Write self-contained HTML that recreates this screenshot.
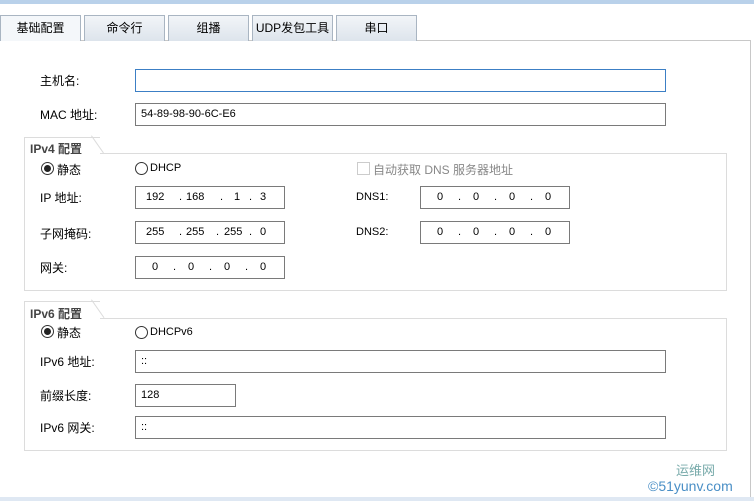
<!DOCTYPE html>
<html><head><meta charset="utf-8"><style>
*{box-sizing:border-box;margin:0;padding:0}
body{width:754px;height:501px;background:#fff;position:relative;overflow:hidden;font-family:"Liberation Sans","Noto Sans CJK SC",sans-serif;font-size:12px;color:#000}
.a{position:absolute}
.tab{position:absolute;top:15px;height:26px;width:81px;border:1px solid #a9b5c2;border-bottom:none;background:linear-gradient(#f2f5f8,#dde4ec);text-align:center;line-height:24px;font-size:12px}
.in{position:absolute;height:23px;border:1px solid #7a7a7a;background:#fff;font-size:11px;line-height:21px;padding-left:5px}
.lbl{position:absolute;font-size:12px}
.box{position:absolute;border:1px solid #dcdcdc}
.gt{position:absolute;font-weight:bold;color:#444;font-size:12px}
.radio{position:absolute;width:13px;height:13px;border:1px solid #333;border-radius:50%;background:#fff}
.radio.on::after{content:"";position:absolute;left:2px;top:2px;width:7px;height:7px;border-radius:50%;background:#222}
.ip{position:absolute;height:23px;border:1px solid #7a7a7a;font-size:11px;line-height:21px}
.ip span{position:absolute;top:0}
</style></head><body>
<div class="a" style="left:0;top:0;width:754px;height:4px;background:#b9d1ea"></div>
<div class="a" style="left:0;top:40px;width:751px;height:458px;border:1px solid #c8c8c8;border-left:none"></div>
<div class="a" style="left:0;top:497px;width:754px;height:4px;background:#dfe8f3"></div>
<div class="tab" style="left:0;background:#f4f7fa">基础配置</div>
<div class="tab" style="left:84px">命令行</div>
<div class="tab" style="left:168px">组播</div>
<div class="tab" style="left:252px">UDP发包工具</div>
<div class="tab" style="left:336px">串口</div>

<div class="lbl" style="left:40px;top:72px">主机名:</div>
<div class="in" style="left:135px;top:69px;width:531px;border-color:#3c7fc5"></div>
<div class="lbl" style="left:40px;top:106px">MAC 地址:</div>
<div class="in" style="left:135px;top:103px;width:531px">54-89-98-90-6C-E6</div>

<div class="box" style="left:24px;top:153px;width:703px;height:138px"></div>
<div class="a" style="left:24px;top:137px;width:76px;height:17px;border:1px solid #dcdcdc;border-bottom:none;border-right:none;background:#fff"></div>
<div class="a" style="left:91px;top:136px;width:1px;height:21px;background:#dcdcdc;transform:rotate(-35deg);transform-origin:top left"></div>
<div class="gt" style="left:30px;top:140px">IPv4 配置</div>
<div class="radio on" style="left:41px;top:162px"></div><div class="lbl" style="left:57px;top:161px">静态</div>
<div class="radio" style="left:135px;top:162px"></div><div class="lbl" style="left:150px;top:162px;font-size:11px">DHCP</div>
<div class="a" style="left:357px;top:162px;width:13px;height:13px;border:1px solid #ccc"></div>
<div class="lbl" style="left:373px;top:161px;color:#888">自动获取 DNS 服务器地址</div>

<div class="lbl" style="left:40px;top:189px">IP 地址:</div>
<div class="ip" style="left:135px;top:186px;width:150px"><span style="left:10px">192</span><span style="left:43px">.</span><span style="left:50px">168</span><span style="left:84px">.</span><span style="left:98px">1</span><span style="left:113px">.</span><span style="left:124px">3</span></div>
<div class="lbl" style="left:40px;top:225px">子网掩码:</div>
<div class="ip" style="left:135px;top:221px;width:150px"><span style="left:10px">255</span><span style="left:43px">.</span><span style="left:50px">255</span><span style="left:80px">.</span><span style="left:88px">255</span><span style="left:113px">.</span><span style="left:124px">0</span></div>
<div class="lbl" style="left:40px;top:259px">网关:</div>
<div class="ip" style="left:135px;top:256px;width:150px"><span style="left:16px">0</span><span style="left:37px">.</span><span style="left:52px">0</span><span style="left:73px">.</span><span style="left:88px">0</span><span style="left:109px">.</span><span style="left:124px">0</span></div>
<div class="lbl" style="left:356px;top:191px;font-size:11px">DNS1:</div>
<div class="ip" style="left:420px;top:186px;width:150px"><span style="left:16px">0</span><span style="left:37px">.</span><span style="left:52px">0</span><span style="left:73px">.</span><span style="left:88px">0</span><span style="left:109px">.</span><span style="left:124px">0</span></div>
<div class="lbl" style="left:356px;top:226px;font-size:11px">DNS2:</div>
<div class="ip" style="left:420px;top:221px;width:150px"><span style="left:16px">0</span><span style="left:37px">.</span><span style="left:52px">0</span><span style="left:73px">.</span><span style="left:88px">0</span><span style="left:109px">.</span><span style="left:124px">0</span></div>

<div class="box" style="left:24px;top:318px;width:703px;height:133px"></div>
<div class="a" style="left:24px;top:301px;width:76px;height:18px;border:1px solid #dcdcdc;border-bottom:none;border-right:none;background:#fff"></div>
<div class="a" style="left:91px;top:300px;width:1px;height:22px;background:#dcdcdc;transform:rotate(-35deg);transform-origin:top left"></div>
<div class="gt" style="left:30px;top:305px">IPv6 配置</div>
<div class="radio on" style="left:41px;top:325px"></div><div class="lbl" style="left:57px;top:324px">静态</div>
<div class="radio" style="left:135px;top:326px"></div><div class="lbl" style="left:150px;top:326px;font-size:11px">DHCPv6</div>
<div class="lbl" style="left:40px;top:353px">IPv6 地址:</div>
<div class="in" style="left:135px;top:350px;width:531px">::</div>
<div class="lbl" style="left:40px;top:387px">前缀长度:</div>
<div class="in" style="left:135px;top:384px;width:101px">128</div>
<div class="lbl" style="left:40px;top:419px">IPv6 网关:</div>
<div class="in" style="left:135px;top:416px;width:531px">::</div>
<div class="lbl" style="left:676px;top:460px;color:#7aa;font-size:13px">运维网</div>
<div class="lbl" style="left:648px;top:478px;color:#4a8fc6;font-size:14px">©51yunv.com</div>
</body></html>
